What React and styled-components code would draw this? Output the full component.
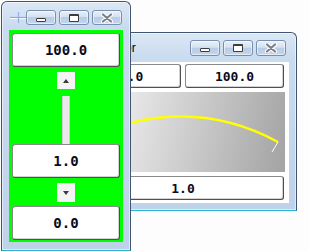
import React from 'react'
import styled, { createGlobalStyle } from 'styled-components'

const GlobalStyle = createGlobalStyle`
  body {
    margin: 0;
    background: #ffffff;
    font-family: "Liberation Sans", Arial, sans-serif;
  }
`

const Desktop = styled.div`
  position: relative;
  width: 309px;
  height: 251px;
  overflow: hidden;
  background: #fdfdfd;
`

// windows sit on a free desktop, so they keep their own coordinates
const Window = styled.div`
  position: absolute;
  left: ${p => p.$x}px;
  top: ${p => p.$y}px;
  width: ${p => p.$w}px;
  height: ${p => p.$h}px;
  box-sizing: border-box;
  display: flex;
  flex-direction: column;
  padding: 0 ${p => p.$padR}px ${p => p.$padB}px ${p => p.$padL}px;
  border: 1px solid #3f5571;
  border-bottom-color: #29b4d4;
  border-radius: 6px 6px 0 0;
  background: linear-gradient(180deg, #dbe7f4 0px, #c9dbef 26px, #bed2ea 100%);
  box-shadow: inset 0 0 0 1px rgba(255, 255, 255, 0.55);
`

const TitleBar = styled.div`
  height: ${p => p.$h}px;
  flex: none;
  display: flex;
  align-items: flex-start;
  padding-top: ${p => p.$top}px;
  padding-left: ${p => p.$left}px;
  padding-right: ${p => p.$right || 0}px;
  box-sizing: border-box;
`

const TitleText = styled.span`
  flex: 1;
  font-size: 12px;
  color: #000;
  line-height: 16px;
`

const TitleIcon = styled.svg`
  flex: none;
  margin-top: 1px;
`

const Spacer = styled.div`
  flex: 1;
`

const Buttons = styled.div`
  display: flex;
  gap: 3px;
`

const CaptionButton = styled.div`
  width: 30px;
  height: ${p => p.$h}px;
  box-sizing: border-box;
  border: 1px solid #7890b0;
  border-radius: 3px;
  background: linear-gradient(180deg, #e8eff8 0%, #d6e2f1 45%, #b8cce6 50%, #c4d6ed 100%);
  box-shadow: inset 0 0 0 1px rgba(255, 255, 255, 0.55);
  display: flex;
  align-items: center;
  justify-content: center;
`

const MinGlyph = styled.div`
  width: 10px;
  height: 4px;
  margin-top: 4px;
  box-sizing: border-box;
  background: #fff;
  border: 1px solid #3c3c3c;
  border-radius: 1px;
`

const MaxGlyph = styled.div`
  width: 10px;
  height: 8px;
  box-sizing: border-box;
  background: #fff;
  border: 1px solid #3c3c3c;
  border-top-width: 2px;
  border-radius: 1px;
`

const Client = styled.div`
  flex: 1;
  box-sizing: border-box;
  display: flex;
  flex-direction: column;
  background: ${p => p.$bg};
  padding: ${p => p.$pad};
`

const ValueBox = styled.div`
  height: ${p => p.$h}px;
  width: ${p => (p.$w ? `${p.$w}px` : 'auto')};
  flex: none;
  box-sizing: border-box;
  display: flex;
  align-items: center;
  justify-content: center;
  background: #fff;
  border: 1px solid;
  border-color: #8a8a8a #4f4f4f #4f4f4f #8a8a8a;
  border-radius: 3px;
  box-shadow: inset -1px -1px 0 #d2d2d2;
  font-family: "DejaVu Sans Mono", "Liberation Mono", monospace;
  font-weight: bold;
  font-size: ${p => p.$fs}px;
  color: #0b0b1e;
  margin-top: ${p => p.$mt || 0}px;
`

const SpinButton = styled.div`
  width: 18px;
  height: ${p => p.$h}px;
  flex: none;
  align-self: center;
  margin-top: ${p => p.$mt}px;
  background: #f4f4f4;
  display: flex;
  align-items: center;
  justify-content: center;
`

const Arrow = styled.div`
  width: 0;
  height: 0;
  border-left: 3px solid transparent;
  border-right: 3px solid transparent;
  ${p =>
    p.$up
      ? 'border-bottom: 4px solid #3a3a3a;'
      : 'border-top: 4px solid #3a3a3a;'}
`

const Track = styled.div`
  flex: 1;
  width: 8px;
  align-self: center;
  margin-top: 7px;
  box-sizing: border-box;
  background: #e9e9e9;
  border-left: 1px solid #cfcfcf;
  border-right: 1px solid #cfcfcf;
`

const TopRow = styled.div`
  display: grid;
  grid-template-columns: 99px 99px;
  gap: 4px;
`

const Meter = styled.div`
  height: 80px;
  flex: none;
  margin-top: 4px;
  background: linear-gradient(102deg, #fbfbfb 0%, #a3a3a3 100%);
`

const CloseGlyph = () => (
  <svg width="14" height="10" viewBox="0 0 14 10">
    <path d="M3 1.5 L11 8.5 M11 1.5 L3 8.5" stroke="#ffffff" strokeWidth="4.2" strokeLinecap="round" />
    <path d="M3 1.5 L11 8.5 M11 1.5 L3 8.5" stroke="#7a7f88" strokeWidth="2.2" strokeLinecap="round" />
  </svg>
)

const Captions = ({ h }) => (
  <Buttons>
    <CaptionButton $h={h}><MinGlyph /></CaptionButton>
    <CaptionButton $h={h}><MaxGlyph /></CaptionButton>
    <CaptionButton $h={h}><CloseGlyph /></CaptionButton>
  </Buttons>
)

const App = () => {
  return (
    <>
      <GlobalStyle />
      <Desktop>
        <Window $x={72} $y={32} $w={225} $h={179} $padL={6} $padR={7} $padB={7}>
          <TitleBar $h={29} $top={7} $left={26} $right={3}>
            <TitleText>Slider</TitleText>
            <Captions h={16} />
          </TitleBar>
          <Client $bg="#ffffff" $pad="2px 4px 3px 3px">
            <TopRow>
              <ValueBox $h={24} $fs={13}>0.0</ValueBox>
              <ValueBox $h={24} $fs={13}>100.0</ValueBox>
            </TopRow>
            <Meter>
              <svg width="203" height="80" viewBox="0 0 203 80">
                <path d="M0 48 Q104 0 196 50" fill="none" stroke="#ffff00" strokeWidth="2.4" />
                <path d="M196 50 L190 60" stroke="#ffffff" strokeWidth="1" />
              </svg>
            </Meter>
            <ValueBox $h={24} $w={202} $fs={13} $mt={4}>1.0</ValueBox>
          </Client>
        </Window>

        <Window $x={1} $y={1} $w={130} $h={250} $padL={7} $padR={7} $padB={8}>
          <TitleBar $h={28} $top={8} $left={1} $right={1}>
            <TitleIcon width="16" height="12" viewBox="0 0 16 12">
              <path d="M0 6.5 H16" stroke="#8fa5e4" strokeWidth="1.2" />
              <path d="M0 7.6 H16" stroke="#ffffff" strokeWidth="0.9" />
              <path d="M8.5 1 V12" stroke="#9aafe8" strokeWidth="1.2" />
            </TitleIcon>
            <Spacer />
            <Captions h={15} />
          </TitleBar>
          <Client $bg="#00ff00" $pad="3px 3px 2px 3px">
            <ValueBox $h={34} $fs={14}>100.0</ValueBox>
            <SpinButton $h={17} $mt={5}><Arrow $up /></SpinButton>
            <Track />
            <ValueBox $h={34} $fs={14}>1.0</ValueBox>
            <SpinButton $h={19} $mt={5}><Arrow /></SpinButton>
            <ValueBox $h={34} $fs={14} $mt={4}>0.0</ValueBox>
          </Client>
        </Window>
      </Desktop>
    </>
  )
}

export default App
